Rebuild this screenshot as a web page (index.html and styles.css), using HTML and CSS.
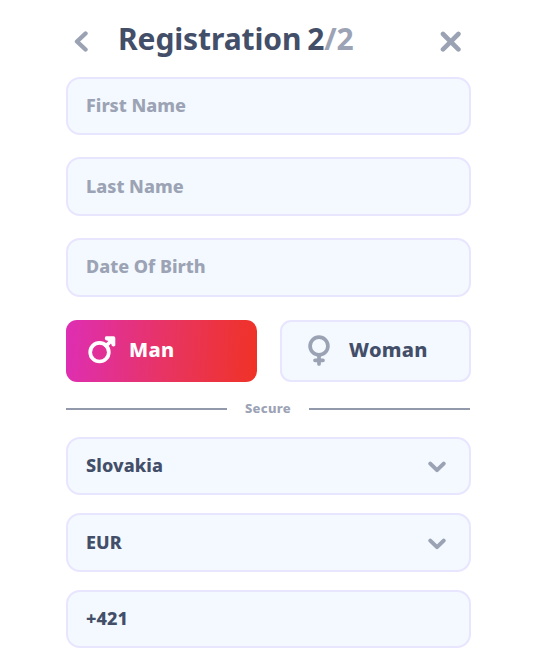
FILE: index.html
```html
<!DOCTYPE html>
<html lang="en">
<head>
  <meta charset="UTF-8">
  <meta name="viewport" content="width=device-width, initial-scale=1.0">
  <title>Registration</title>
  <link rel="stylesheet" href="styles.css">
</head>
<body>
  <div class="wrapper">
    <header class="header">
      <svg class="back" viewBox="0 0 16 22"><path d="M12.5 3.5L4 11.5L12.5 19.5"/></svg>
      <h1 class="title">Registration <span class="current">2</span><span class="total">/2</span></h1>
      <svg class="close" viewBox="0 0 22 22"><path d="M3 3L18.4 18.4M18.4 3L3 18.4"/></svg>
    </header>

    <div class="names">
      <div class="field placeholder"><span>First Name</span></div>
      <div class="field placeholder"><span>Last Name</span></div>
      <div class="field placeholder"><span>Date Of Birth</span></div>
    </div>

    <div class="genders">
      <div class="gender active">
        <svg class="male" viewBox="0 0 28 28">
          <circle cx="11.5" cy="16.2" r="9.3"/>
          <path d="M18 9.8L23 5"/>
          <path class="head" d="M17.8 0.3H25.6Q27.3 0.3 27.3 2V9.6Q25.5 11.5 23.8 9.8L23.3 8L20 4.7L17.8 4.3Q15.8 2.3 17.8 0.3Z"/>
        </svg>
        <span>Man</span>
      </div>
      <div class="gender">
        <svg class="female" viewBox="0 0 22 32">
          <circle cx="11" cy="11" r="8.9"/>
          <path d="M11 20V29M7 25.3H15"/>
        </svg>
        <span>Woman</span>
      </div>
    </div>

    <div class="divider"><span>Secure</span></div>

    <div class="details">
      <div class="field">
        <span>Slovakia</span>
        <svg class="arrow" viewBox="0 0 18 12"><path d="M2.3 2.6L9 9.1L15.7 2.6"/></svg>
      </div>
      <div class="field">
        <span>EUR</span>
        <svg class="arrow" viewBox="0 0 18 12"><path d="M2.3 2.6L9 9.1L15.7 2.6"/></svg>
      </div>
      <div class="field"><span>+421</span></div>
    </div>
  </div>
</body>
</html>
```
FILE: styles.css
```css
*{
  margin:0;
  box-sizing: border-box;
}
body{
  background-color: #fff;
  font-family: "Noto Sans", sans-serif;
  font-weight: 800;
  color: #434e69;
}
.wrapper{
  width: 405px;
  margin-left: 66px;
}
svg{
  display: block;
  flex: none;
  fill: none;
  stroke: #9aa2b3;
  stroke-linecap: round;
  stroke-linejoin: round;
}
.header{
  display: flex;
  align-items: center;
  height: 76.5px;
  padding: 2px 9px 0 7px;
}
.back{
  width: 16px;
  height: 22px;
  margin-top: 4px;
  stroke-width: 4.4;
}
.title{
  flex: 1;
  margin-left: 29px;
  font-size: 30px;
  font-weight: 700;
  line-height: 40px;
  letter-spacing: -0.1px;
  word-spacing: -2px;
  white-space: nowrap;
}
.total{
  color: #9ca3b5;
}
.close{
  width: 22px;
  height: 22px;
  margin-top: 5px;
  stroke-width: 4.6;
}
.names{
  display: flex;
  flex-direction: column;
  gap: 22.5px;
}
.field{
  display: flex;
  justify-content: space-between;
  align-items: center;
  height: 58.4px;
  padding: 0 23px 0 18px;
  border: 2px solid #e8e5ff;
  border-radius: 14px;
  background-color: #f3f9fe;
  font-size: 18px;
}
.field span{
  margin-top: -2px;
}
.placeholder{
  color: #9ca3b5;
}
.arrow{
  width: 18px;
  height: 12px;
  margin-top: 2px;
  stroke-width: 4;
}
.genders{
  display: grid;
  grid-template-columns: 191px 191px;
  justify-content: space-between;
  margin-top: 23.3px;
}
.gender{
  display: flex;
  align-items: center;
  height: 62px;
  border: 2px solid #e8e5ff;
  border-radius: 11px;
  background-color: #f3f9fe;
  font-size: 20px;
  letter-spacing: 0.3px;
}
.gender span{
  margin-top: -2px;
}
.active{
  border: 0;
  background: linear-gradient(94deg, #de2eb4, #e8345f 55%, #f03226);
  color: #fff;
}
.male{
  width: 28px;
  height: 28px;
  margin: -1px 13px 0 22px;
  stroke: #fff;
  stroke-width: 3.7;
}
.male .head{
  fill: #fff;
  stroke: none;
}
.female{
  width: 22px;
  height: 32px;
  margin: 0 19px 0 26px;
  stroke-width: 3.7;
}
.divider{
  display: flex;
  align-items: center;
  gap: 18px;
  height: 54px;
  margin-bottom: 1px;
  padding-right: 1px;
  color: #9ca3b5;
  font-size: 13px;
  letter-spacing: 0.3px;
}
.divider::before,
.divider::after{
  content: "";
  flex: 1;
  height: 2px;
  background-color: #9299aa;
}
.divider span{
  margin-top: -1px;
}
.details{
  display: flex;
  flex-direction: column;
  gap: 18px;
}
.details span{
  letter-spacing: 0.1px;
}
```
